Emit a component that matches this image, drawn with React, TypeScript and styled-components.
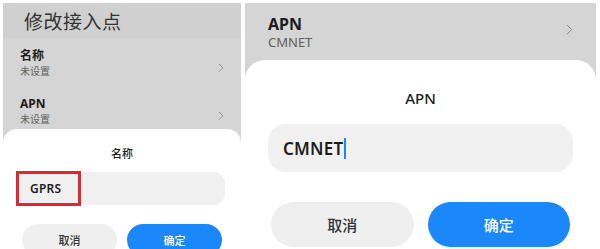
import React from "react"
import styled, { createGlobalStyle } from "styled-components"

const GlobalStyle = createGlobalStyle`
    html, body {
        margin: 0;
        padding: 0;
        background: #ffffff;
    }
    body {
        font-family: "Noto Sans", "Noto Sans CJK SC", sans-serif;
        color: #1a1a1a;
    }
`

const blue = "#1a87fa"

const Page = styled.div`
    display: flex;
    gap: 4px;
    padding: 3px 4px 0 3px;
    width: 600px;
    height: 249px;
    box-sizing: border-box;
    overflow: hidden;
`

const Panel = styled.div<{ $width: number }>`
    width: ${p => p.$width}px;
    height: 246px;
    display: flex;
    flex-direction: column;
    background: #d5d5d5;
    overflow: hidden;
`

const Header = styled.div`
    height: 35px;
    flex-shrink: 0;
    background: #d0d0d0;
    display: flex;
    align-items: center;
    padding-left: 21px;
    font-size: 19px;
    color: #333;
    letter-spacing: 0.5px;
`

const ListItem = styled.div<{ $height: number; $top: number; $pad: number }>`
    height: ${p => p.$height}px;
    flex-shrink: 0;
    box-sizing: border-box;
    padding: ${p => p.$top}px ${p => p.$pad}px 0 ${p => p.$pad}px;
    display: flex;
    align-items: flex-start;
    justify-content: space-between;
`

const ItemText = styled.div`
    display: flex;
    flex-direction: column;
`

const Label = styled.span<{ $size: number }>`
    font-size: ${p => p.$size}px;
    line-height: ${p => p.$size + 4}px;
    font-weight: 700;
    color: #1c1c1c;
`

const SubLabel = styled.span<{ $size: number }>`
    font-size: ${p => p.$size}px;
    line-height: ${p => p.$size + 4}px;
    color: #606060;
`

const Chevron = styled.svg<{ $mt: number }>`
    margin-top: ${p => p.$mt}px;
    flex-shrink: 0;
`

const Sheet = styled.div<{ $radius: number; $padTop: number; $pad: number }>`
    flex: 1;
    background: #ffffff;
    border-radius: ${p => p.$radius}px ${p => p.$radius}px 0 0;
    padding: ${p => p.$padTop}px ${p => p.$pad}px 0;
    display: flex;
    flex-direction: column;
`

const SheetTitle = styled.div<{ $size: number }>`
    text-align: center;
    font-size: ${p => p.$size}px;
    line-height: ${p => p.$size + 5}px;
    font-weight: 500;
    color: #1c1c1c;
`

const Input = styled.div<{ $height: number; $mt: number; $radius: number; $pl: number; $mr: number }>`
    position: relative;
    height: ${p => p.$height}px;
    margin: ${p => p.$mt}px ${p => p.$mr}px 0 0;
    border-radius: ${p => p.$radius}px;
    background: #f0f0f0;
    display: flex;
    align-items: center;
    padding-left: ${p => p.$pl}px;
`

const InputText = styled.span<{ $size: number }>`
    font-size: ${p => p.$size}px;
    font-weight: 600;
    color: #1c1c1c;
    letter-spacing: 0.2px;
`

const Caret = styled.span`
    display: inline-block;
    width: 2px;
    height: 21px;
    background: ${blue};
    margin-left: 1px;
`

const RedBox = styled.div`
    position: absolute;
    left: 0;
    top: -1px;
    width: 65px;
    height: 35px;
    box-sizing: border-box;
    border: 3px solid #e3262b;
`

const Buttons = styled.div<{ $mt: number; $gap: number; $pad: number }>`
    display: flex;
    gap: ${p => p.$gap}px;
    margin-top: ${p => p.$mt}px;
    padding: 0 ${p => p.$pad}px;
`

const Button = styled.button<{ $primary?: boolean; $height: number; $size: number }>`
    flex: 1;
    height: ${p => p.$height}px;
    border: none;
    border-radius: ${p => p.$height / 2}px;
    background: ${p => (p.$primary ? blue : "#efefef")};
    color: ${p => (p.$primary ? "#ffffff" : "#333333")};
    font-family: inherit;
    font-size: ${p => p.$size}px;
    font-weight: 500;
    padding: 0;
`

const ChevronIcon = ({ size, mt }: { size: number; mt: number }) => (
    <Chevron $mt={mt} width={size} height={size * 1.6} viewBox="0 0 10 16">
        <polyline points="2,2 8,8 2,14" fill="none" stroke="#7a7a7a" strokeWidth="1.3" strokeLinecap="round" strokeLinejoin="round" />
    </Chevron>
)

export default function App() {
    return (
        <>
            <GlobalStyle />
            <Page>
                <Panel $width={238}>
                    <Header>修改接入点</Header>
                    <ListItem $height={47} $top={10} $pad={17}>
                        <ItemText>
                            <Label $size={12}>名称</Label>
                            <SubLabel $size={10}>未设置</SubLabel>
                        </ItemText>
                        <ChevronIcon size={6} mt={15} />
                    </ListItem>
                    <ListItem $height={44} $top={11} $pad={17}>
                        <ItemText>
                            <Label $size={12}>APN</Label>
                            <SubLabel $size={10}>未设置</SubLabel>
                        </ItemText>
                        <ChevronIcon size={6} mt={15} />
                    </ListItem>
                    <Sheet $radius={14} $padTop={17} $pad={13}>
                        <SheetTitle $size={11}>名称</SheetTitle>
                        <Input $height={33} $mt={10} $radius={12} $pl={14} $mr={3}>
                            <InputText $size={12}>GPRS</InputText>
                            <RedBox />
                        </Input>
                        <Buttons $mt={19} $gap={10} $pad={6}>
                            <Button $height={32} $size={11}>取消</Button>
                            <Button $primary $height={32} $size={11}>确定</Button>
                        </Buttons>
                    </Sheet>
                </Panel>
                <Panel $width={351}>
                    <ListItem $height={57} $top={11} $pad={23}>
                        <ItemText>
                            <Label $size={16}>APN</Label>
                            <SubLabel $size={13}>CMNET</SubLabel>
                        </ItemText>
                        <ChevronIcon size={7} mt={10} />
                    </ListItem>
                    <Sheet $radius={20} $padTop={28} $pad={23}>
                        <SheetTitle $size={15}>APN</SheetTitle>
                        <Input $height={48} $mt={16} $radius={18} $pl={15} $mr={0}>
                            <InputText $size={17}>CMNET</InputText>
                            <Caret />
                        </Input>
                        <Buttons $mt={30} $gap={14} $pad={3}>
                            <Button $height={45} $size={15}>取消</Button>
                            <Button $primary $height={45} $size={15}>确定</Button>
                        </Buttons>
                    </Sheet>
                </Panel>
            </Page>
        </>
    )
}
